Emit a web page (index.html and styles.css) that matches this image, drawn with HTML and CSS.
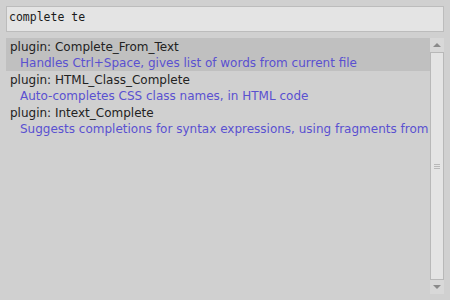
FILE: index.html
```html
<!DOCTYPE html>
<html lang="en">
<head>
  <meta charset="UTF-8" />
  <title>Plugin search</title>
  <link rel="stylesheet" href="styles.css">
</head>
<body>
  <div class="panel">
    <div class="search">complete te</div>

    <div class="results">
      <div class="list">
        <div class="item selected">
          <div class="name">plugin: Complete_From_Text</div>
          <div class="desc">Handles Ctrl+Space, gives list of words from current file</div>
        </div>
        <div class="item">
          <div class="name">plugin: HTML_Class_Complete</div>
          <div class="desc">Auto-completes CSS class names, in HTML code</div>
        </div>
        <div class="item">
          <div class="name">plugin: Intext_Complete</div>
          <div class="desc">Suggests completions for syntax expressions, using fragments from current file</div>
        </div>
      </div>

      <div class="scrollbar">
        <div class="arrow up"></div>
        <div class="thumb"><span class="grip"></span></div>
        <div class="arrow down"></div>
      </div>
    </div>
  </div>
</body>
</html>
```

FILE: styles.css
```css
* {
  box-sizing: border-box;
  margin: 0;
  padding: 0;
}

body {
  background: #d0d0d0;
  font-family: 'DejaVu Sans', sans-serif;
  font-size: 12px;
}

.panel {
  padding: 6px;
  height: 300px;
  display: flex;
  flex-direction: column;
  gap: 6px;
}

.search {
  height: 26px;
  background: #e4e4e4;
  border: 1px solid #bcbcbc;
  font-family: 'DejaVu Sans Mono', monospace;
  font-size: 11.5px;
  color: #1a1a1a;
  padding: 3px 2px;
}

.results {
  flex: 1;
  display: flex;
  margin-bottom: 0;
}

.list {
  flex: 1;
  overflow: hidden;
  white-space: nowrap;
}

.item {
  height: 33px;
  padding-top: 1px;
}

.item.selected {
  background: #c0c0c0;
}

.name {
  color: #222;
  padding-left: 4px;
  line-height: 16px;
}

.desc {
  color: #5a50d0;
  padding-left: 14px;
  line-height: 16px;
}

.scrollbar {
  width: 14px;
  display: flex;
  flex-direction: column;
  background: #d8d8d8;
}

.arrow {
  height: 14px;
  display: flex;
  align-items: center;
  justify-content: center;
  background: #d8d8d8;
}

.arrow::after {
  content: '';
  border-left: 4px solid transparent;
  border-right: 4px solid transparent;
}

.arrow.up::after {
  border-bottom: 4px solid #8a8a8a;
}

.arrow.down::after {
  border-top: 4px solid #8a8a8a;
}

.thumb {
  flex: 1;
  background: #e4e4e4;
  border: 1px solid #b8b8b8;
  display: flex;
  justify-content: center;
  align-items: center;
}

.grip {
  width: 6px;
  height: 5px;
  border-top: 1px solid #b8b8b8;
  border-bottom: 1px solid #b8b8b8;
  position: relative;
}

.grip::after {
  content: '';
  position: absolute;
  left: 0;
  right: 0;
  top: 1px;
  border-top: 1px solid #b8b8b8;
}
```
